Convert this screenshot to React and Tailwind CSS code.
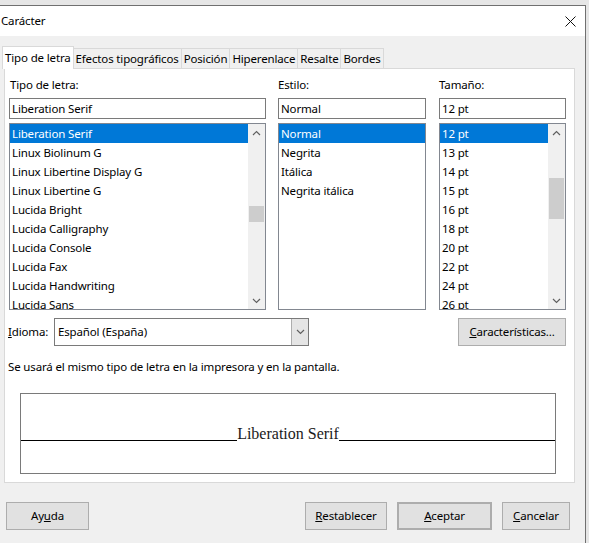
import React from 'react'

const FONTS = [
  'Liberation Serif',
  'Linux Biolinum G',
  'Linux Libertine Display G',
  'Linux Libertine G',
  'Lucida Bright',
  'Lucida Calligraphy',
  'Lucida Console',
  'Lucida Fax',
  'Lucida Handwriting',
  'Lucida Sans',
]
const STYLES = ['Normal', 'Negrita', 'Itálica', 'Negrita itálica']
const SIZES = ['12 pt', '13 pt', '14 pt', '15 pt', '16 pt', '18 pt', '20 pt', '22 pt', '24 pt', '26 pt']
const TABS = ['Tipo de letra', 'Efectos tipográficos', 'Posición', 'Hiperenlace', 'Resalte', 'Bordes']

function Chevron({ up }) {
  return (
    <svg width="9" height="6" viewBox="0 0 9 6" className="block">
      <polyline
        points={up ? '1,5 4.5,1.5 8,5' : '1,1 4.5,4.5 8,1'}
        fill="none"
        stroke="#606060"
        strokeWidth="1.2"
      />
    </svg>
  )
}

function Scrollbar({ thumbTop, thumbHeight }) {
  return (
    <div className="w-[17px] h-full bg-[#f0f0f0] flex flex-col items-center shrink-0">
      <div className="h-[17px] w-full flex items-center justify-center">
        <Chevron up />
      </div>
      <div className="flex-1 w-full px-[1px]">
        <div className="w-full bg-[#cdcdcd]" style={{ marginTop: thumbTop, height: thumbHeight }} />
      </div>
      <div className="h-[17px] w-full flex items-center justify-center">
        <Chevron />
      </div>
    </div>
  )
}

function ListBox({ items, width, scroll }) {
  return (
    <div className="h-[187px] border border-[#828790] bg-white flex overflow-hidden" style={{ width }}>
      <div className="flex-1 overflow-hidden">
        {items.map((item, i) => (
          <div
            key={item}
            className={`h-[19px] leading-[19px] pl-[2px] whitespace-nowrap ${
              i === 0 ? 'bg-[#0078d7] text-white' : 'text-black'
            }`}
          >
            {item}
          </div>
        ))}
      </div>
      {scroll && <Scrollbar thumbTop={scroll.top} thumbHeight={scroll.height} />}
    </div>
  )
}

function Field({ value, width }) {
  return (
    <div
      className="h-[21px] border border-[#7a7a7a] bg-white leading-[19px] pl-[2px] text-black"
      style={{ width }}
    >
      {value}
    </div>
  )
}

function Btn({ children, className = '' }) {
  return (
    <div
      className={`h-[28px] flex items-center justify-center bg-[#e1e1e1] border border-[#adadad] text-black ${className}`}
    >
      {children}
    </div>
  )
}

export default function App() {
  return (
    <div
      className="w-[589px] h-[543px] bg-[#e6e6e6] overflow-hidden text-[11.5px] tracking-[-0.15px]"
      style={{ fontFamily: '"Noto Sans", "Open Sans", sans-serif' }}
    >
      <div className="mt-[5px] w-[586px] h-[538px] border-t border-r border-[#707070] bg-[#f0f0f0] flex flex-col">
        {/* Title bar */}
        <div className="h-[30px] bg-white flex items-center justify-between pl-[1px] pr-[9px] shrink-0">
          <span className="text-black">Carácter</span>
          <svg width="11" height="11" viewBox="0 0 11 11">
            <path d="M0.5 0.5 L10.5 10.5 M10.5 0.5 L0.5 10.5" stroke="#111" strokeWidth="1" />
          </svg>
        </div>

        {/* Tabs */}
        <div className="pt-[9px] pl-[2px] flex items-end h-[32px] shrink-0">
          {TABS.map((t, i) =>
            i === 0 ? (
              <div
                key={t}
                className="h-[23px] px-[2px] bg-white border border-b-0 border-[#d9d9d9] flex items-center relative z-10 -mb-px"
              >
                {t}
              </div>
            ) : (
              <div
                key={t}
                className="h-[20px] px-[2px] bg-[#f0f0f0] border border-l-0 border-b-0 border-[#d9d9d9] flex items-center"
              >
                {t}
              </div>
            )
          )}
        </div>

        {/* Panel */}
        <div className="ml-[4px] w-[571px] h-[415px] bg-white border border-[#d9d9d9] pl-[4px] pt-[5px] shrink-0 flex flex-col">
          <div className="flex">
            <div className="w-[257px]">
              <div className="h-[22px] pl-[1px] leading-[22px]">Tipo de letra:</div>
              <div className="mt-[2px]">
                <Field value="Liberation Serif" width={257} />
              </div>
              <div className="mt-[4px]">
                <ListBox items={FONTS} width={257} scroll={{ top: 65, height: 16 }} />
              </div>
            </div>
            <div className="w-[148px] ml-[12px]">
              <div className="h-[22px] leading-[22px]">Estilo:</div>
              <div className="mt-[2px]">
                <Field value="Normal" width={148} />
              </div>
              <div className="mt-[4px]">
                <ListBox items={STYLES} width={148} />
              </div>
            </div>
            <div className="w-[127px] ml-[13px]">
              <div className="h-[22px] leading-[22px]">Tamaño:</div>
              <div className="mt-[2px]">
                <Field value="12 pt" width={127} />
              </div>
              <div className="mt-[4px]">
                <ListBox items={SIZES} width={127} scroll={{ top: 37, height: 41 }} />
              </div>
            </div>
          </div>

          {/* Idioma row */}
          <div className="flex items-center mt-[8px] h-[28px]">
            <span className="w-[46px] -ml-[1px]">
              <span className="underline">I</span>dioma:
            </span>
            <div className="w-[255px] h-[28px] border border-[#7a7a7a] bg-white flex">
              <div className="flex-1 leading-[26px] pl-[3px]">Español (España)</div>
              <div className="w-[17px] bg-[#e5e5e5] border-l border-[#adadad] flex items-center justify-center">
                <Chevron />
              </div>
            </div>
            <div className="flex-1" />
            <Btn className="w-[108px] mr-[8px]">
              <span>
                <span className="underline">C</span>aracterísticas...
              </span>
            </Btn>
          </div>

          <div className="mt-[12px] -ml-[1px] leading-[18px]">
            Se usará el mismo tipo de letra en la impresora y en la pantalla.
          </div>

          {/* Preview */}
          <div className="mt-[17px] ml-[11px] w-[536px] h-[81px] border border-[#7a7a7a] flex flex-col">
            <div className="h-[30px]" />
            <div className="flex items-end h-[20px]">
              <div className="flex-1 h-[1px] bg-black mb-[3px]" />
              <span
                className="text-[16px] leading-[20px] tracking-normal text-[#1a1a1a]"
                style={{ fontFamily: '"Liberation Serif", serif' }}
              >
                Liberation Serif
              </span>
              <div className="flex-1 h-[1px] bg-black mb-[3px]" />
            </div>
          </div>
        </div>

        {/* Buttons */}
        <div className="flex items-center mt-[19px] pl-[6px]">
          <Btn className="w-[83px]">
            <span>
              Ay<span className="underline">u</span>da
            </span>
          </Btn>
          <div className="flex-1" />
          <Btn className="w-[82px]">
            <span>
              <span className="underline">R</span>establecer
            </span>
          </Btn>
          <Btn className="w-[95px] ml-[10px] border-2 border-[#0078d7]">
            <span>
              <span className="underline">A</span>ceptar
            </span>
          </Btn>
          <Btn className="w-[68px] ml-[10px] mr-[15px]">
            <span>
              <span className="underline">C</span>ancelar
            </span>
          </Btn>
        </div>
      </div>
    </div>
  )
}
